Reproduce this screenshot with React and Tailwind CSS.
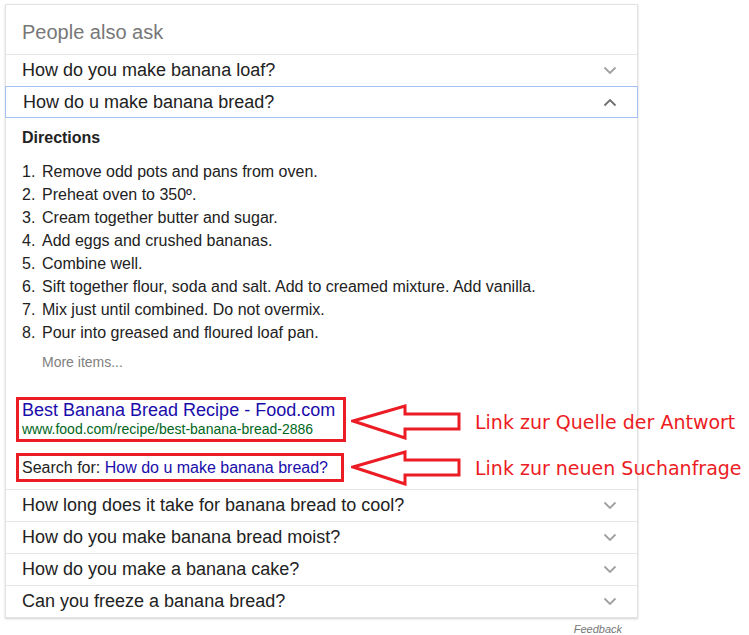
import { useState } from "react";

const QUESTIONS_TOP = ["How do you make banana loaf?"];
const QUESTIONS_BOTTOM = [
  "How long does it take for banana bread to cool?",
  "How do you make banana bread moist?",
  "How do you make a banana cake?",
  "Can you freeze a banana bread?",
];

const STEPS = [
  "Remove odd pots and pans from oven.",
  "Preheat oven to 350º.",
  "Cream together butter and sugar.",
  "Add eggs and crushed bananas.",
  "Combine well.",
  "Sift together flour, soda and salt. Add to creamed mixture. Add vanilla.",
  "Mix just until combined. Do not overmix.",
  "Pour into greased and floured loaf pan.",
];

function Chevron({ up }) {
  return (
    <svg width="14" height="9" viewBox="0 0 14 9" className="shrink-0">
      <path
        d={up ? "M1.5 7.5 L7 2 L12.5 7.5" : "M1.5 1.5 L7 7 L12.5 1.5"}
        fill="none"
        stroke={up ? "#6f6f6f" : "#a0a0a0"}
        strokeWidth="1.8"
      />
    </svg>
  );
}

function Question({ text }) {
  return (
    <div className="h-[32px] border-t border-[#e6e6e6] flex items-center justify-between pl-[16px] pr-[20px] text-[18px] text-[#222]">
      <span>{text}</span>
      <Chevron />
    </div>
  );
}

function Arrow() {
  return (
    <svg width="112" height="36" viewBox="0 0 112 36">
      <polygon
        points="2,17 54,2 54,10 108,10 108,25 54,25 54,34"
        fill="white"
        stroke="#ec1c24"
        strokeWidth="3"
        strokeLinejoin="miter"
      />
    </svg>
  );
}

export default function App() {
  const [open] = useState(true);

  return (
    <div className="relative w-[749px] h-[635px] bg-white font-['Liberation_Sans',Arial,sans-serif] overflow-hidden">
      <div className="pt-[4px] pl-[5px]">
        <div className="w-[633px] border border-[#e2e2e2] shadow-[0_1px_2px_rgba(0,0,0,0.18)] bg-white">
          <div className="h-[49px] flex items-center pl-[16px] pt-[4px] text-[20px] text-[#777]">
            People also ask
          </div>

          {QUESTIONS_TOP.map((q) => (
            <Question key={q} text={q} />
          ))}

          <div className="h-[32px] border border-[#a6c1f3] -mx-px flex items-center justify-between pl-[17px] pr-[20px] text-[18px] text-[#222]">
            <span>How do u make banana bread?</span>
            <Chevron up />
          </div>

          {open && (
            <div className="pl-[16px] pt-[10px] pb-[7px]">
              <div className="text-[16px] leading-[20px] font-bold text-[#222]">Directions</div>
              <ol className="mt-[12px] text-[16px] leading-[23px] text-[#222]">
                {STEPS.map((s, i) => (
                  <li key={i} className="flex">
                    <span className="w-[20px] shrink-0">{i + 1}.</span>
                    <span>{s}</span>
                  </li>
                ))}
              </ol>
              <div className="mt-[9px] pl-[20px] text-[14px] leading-[18px] text-[#808080]">
                More items...
              </div>

              <div className="mt-[26px] -ml-[6px] w-[330px] border-[3px] border-[#ec1c24] px-[3px]">
                <div className="text-[18px] leading-[20px] text-[#1a0dab] whitespace-nowrap">
                  Best Banana Bread Recipe - Food.com
                </div>
                <div className="text-[14px] leading-[19px] text-[#006621] whitespace-nowrap">
                  www.food.com/recipe/best-banana-bread-2886
                </div>
              </div>

              <div className="mt-[11px] -ml-[6px] w-[328px] h-[29px] border-[3px] border-[#ec1c24] px-[3px] flex items-center text-[16px] whitespace-nowrap">
                <span className="text-[#222]">Search for:&nbsp;</span>
                <span className="text-[#1a0dab]">How do u make banana bread?</span>
              </div>
            </div>
          )}

          {QUESTIONS_BOTTOM.map((q) => (
            <Question key={q} text={q} />
          ))}
        </div>

        <div className="w-[617px] text-right text-[11px] italic text-[#777] mt-[3px]">Feedback</div>
      </div>

      {/* annotations */}
      <div className="absolute left-[351px] top-[404px] flex items-center gap-[12px]">
        <Arrow />
        <span className="text-[19px] text-[#ec1c24] font-['DejaVu_Sans',sans-serif] whitespace-nowrap">
          Link zur Quelle der Antwort
        </span>
      </div>
      <div className="absolute left-[351px] top-[450px] flex items-center gap-[12px]">
        <Arrow />
        <span className="text-[19px] text-[#ec1c24] font-['DejaVu_Sans',sans-serif] whitespace-nowrap">
          Link zur neuen Suchanfrage
        </span>
      </div>
    </div>
  );
}
